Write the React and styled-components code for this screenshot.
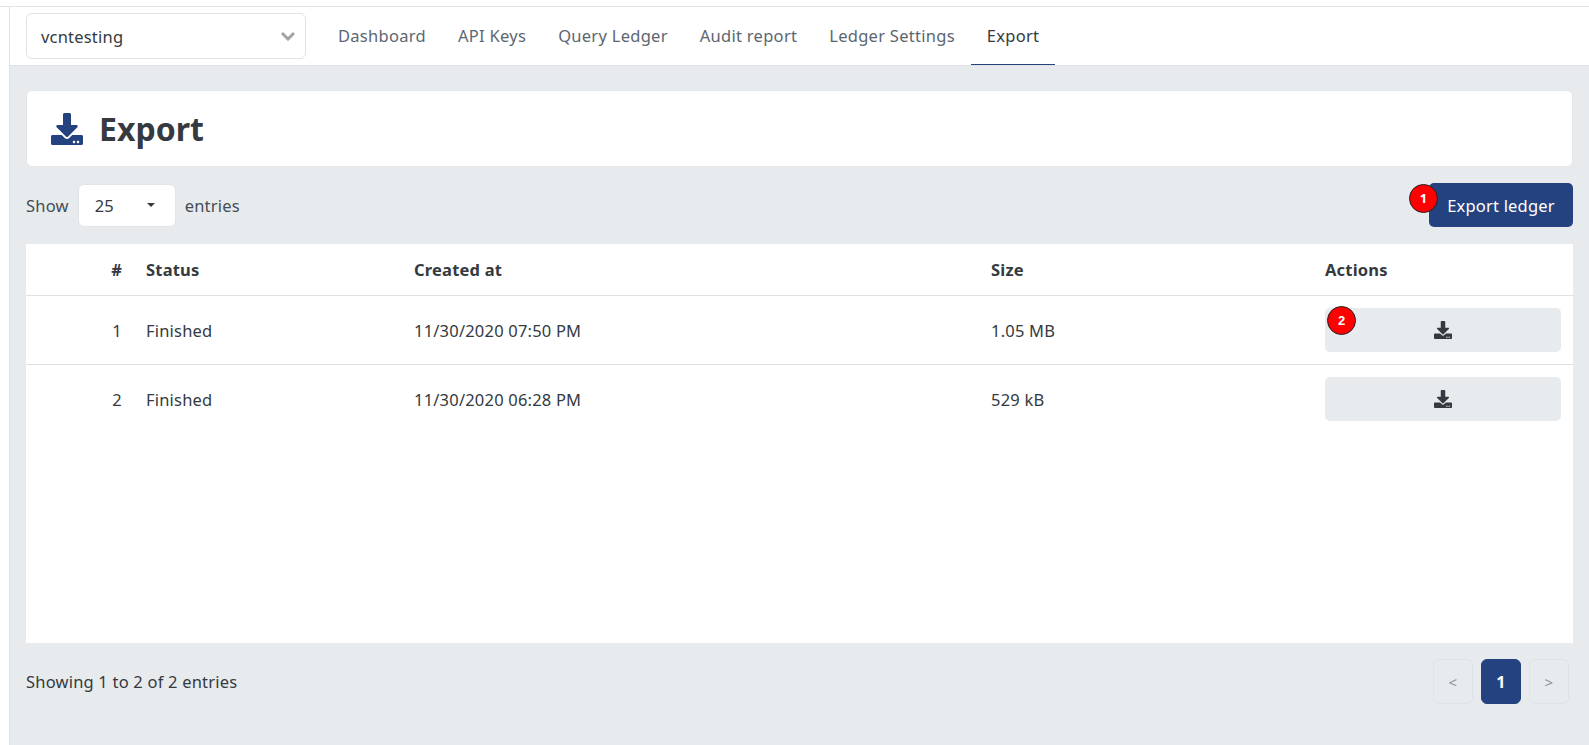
import React from 'react'
import styled, { createGlobalStyle } from 'styled-components'
import { FaDownload } from 'react-icons/fa'

const GlobalStyle = createGlobalStyle`
    html, body {
        margin: 0;
        padding: 0;
        background: #fff;
    }
    body {
        font-family: "Noto Sans", "Open Sans", sans-serif;
        font-size: 16.5px;
        letter-spacing: 0.2px;
        color: #343a40;
        overflow: hidden;
    }
`

const Page = styled.div`
    height: 745px;
    display: flex;
    flex-direction: column;
`
const TopStrip = styled.div`
    height: 6px;
    border-bottom: 1px solid #e1e3ea;
    flex-shrink: 0;
`
const Body = styled.div`
    flex: 1;
    margin-left: 9px;
    border-left: 1px solid #dfe2e6;
    background: #e8ebee;
    display: flex;
    flex-direction: column;
`
const Navbar = styled.div`
    height: 59px;
    box-sizing: border-box;
    background: #fff;
    border-bottom: 1px solid #dee2e6;
    padding-left: 16px;
    display: flex;
`
const LedgerSelect = styled.div`
    width: 280px;
    height: 46px;
    margin-top: 6px;
    box-sizing: border-box;
    border: 1px solid #dee2e6;
    border-radius: 6px;
    padding: 0 9px 0 14px;
    display: flex;
    align-items: center;
    justify-content: space-between;
`
const Tabs = styled.div`
    display: flex;
    margin-left: 16px;
`
const Tab = styled.div`
    padding: 0 16px;
    height: 58px;
    box-sizing: border-box;
    display: flex;
    align-items: center;
    white-space: nowrap;
    letter-spacing: 0.28px;
    color: ${props => props.$active ? '#343a40' : '#5c6670'};
    border-bottom: 1px solid ${props => props.$active ? '#24427f' : 'transparent'};
`
const Content = styled.div`
    padding: 24px 16px 0;
    display: flex;
    flex-direction: column;
`
const TitleCard = styled.div`
    height: 77px;
    background: #fff;
    border-radius: 6px;
    border: 1px solid #e4e7ea;
    box-sizing: border-box;
    padding: 0 24px;
    display: flex;
    align-items: center;
    gap: 16px;
    color: #24427f;
`
const Title = styled.h1`
    margin: 0;
    font-size: 32px;
    font-weight: 700;
    letter-spacing: 0;
    color: #343a40;
`
const Toolbar = styled.div`
    display: flex;
    align-items: center;
    justify-content: space-between;
    margin-top: 16px;
    height: 44px;
`
const EntriesControl = styled.div`
    display: flex;
    align-items: center;
    gap: 9px;
    color: #454d55;
`
const PageSize = styled.div`
    width: 98px;
    height: 43px;
    box-sizing: border-box;
    background: #fff;
    border: 1px solid #e1e4e8;
    border-radius: 6px;
    padding: 0 20px 0 16px;
    display: flex;
    align-items: center;
    justify-content: space-between;
    color: #343a40;
`
const Caret = styled.span`
    width: 0;
    height: 0;
    border-left: 4px solid transparent;
    border-right: 4px solid transparent;
    border-top: 4px solid #343a40;
`
const ExportButton = styled.button`
    position: relative;
    width: 144px;
    height: 44px;
    border: 0;
    border-radius: 5px;
    background: #24427f;
    color: #fff;
    font: inherit;
    letter-spacing: inherit;
    padding: 0;
`
const Marker = styled.span`
    position: absolute;
    left: ${props => props.$left}px;
    top: ${props => props.$top}px;
    width: 29px;
    height: 29px;
    box-sizing: border-box;
    border: 1px solid #222;
    border-radius: 50%;
    background: #ff0000;
    color: #fff;
    font-size: 13px;
    font-weight: 700;
    line-height: 27px;
    text-align: center;
    letter-spacing: 0;
`
const TableCard = styled.div`
    margin-top: 17px;
    height: 399px;
    background: #fff;
`
const Row = styled.div`
    display: grid;
    grid-template-columns: 120px 268px 577px 334px 1fr;
    align-items: center;
    height: ${props => props.$height}px;
    box-sizing: border-box;
    padding-right: 12px;
    padding-bottom: ${props => props.$head ? 1 : 0}px;
    border-bottom: ${props => props.$last ? '0' : '1px solid #dee2e6'};
    font-weight: ${props => props.$head ? 700 : 400};
    color: #343a40;
`
const Index = styled.div`
    text-align: right;
    padding-right: 24px;
`
const ActionButton = styled.button`
    position: relative;
    width: 100%;
    height: 44px;
    border: 0;
    border-radius: 5px;
    background: #e8ebee;
    color: #343a40;
    display: flex;
    align-items: center;
    justify-content: center;
    padding: 0;
`
const Footer = styled.div`
    display: flex;
    align-items: center;
    justify-content: space-between;
    margin-top: 16px;
    height: 45px;
    color: #343a40;
`
const Pagination = styled.div`
    display: flex;
    gap: 8px;
    margin-right: 4px;
`
const PageButton = styled.div`
    width: 40px;
    height: 45px;
    box-sizing: border-box;
    border-radius: 6px;
    display: flex;
    align-items: center;
    justify-content: center;
    font-size: ${props => props.$active ? 16 : 15}px;
    font-weight: ${props => props.$active ? 700 : 400};
    color: ${props => props.$active ? '#fff' : '#8a929a'};
    background: ${props => props.$active ? '#24427f' : 'transparent'};
    border: 1px solid ${props => props.$active ? '#24427f' : '#dfe2e6'};
`

const exportsData = [
    { id: 1, status: 'Finished', created: '11/30/2020 07:50 PM', size: '1.05 MB', marker: true },
    { id: 2, status: 'Finished', created: '11/30/2020 06:28 PM', size: '529 kB' },
]

const tabs = ['Dashboard', 'API Keys', 'Query Ledger', 'Audit report', 'Ledger Settings', 'Export']

const App = () => {
    return (
        <Page>
            <GlobalStyle />
            <TopStrip />
            <Body>
                <Navbar>
                    <LedgerSelect>
                        vcntesting
                        <svg width="16" height="10" viewBox="0 0 16 10">
                            <path d="M2 2l6 6 6-6" fill="none" stroke="#a3a3a3" strokeWidth="3" />
                        </svg>
                    </LedgerSelect>
                    <Tabs>
                        {tabs.map(t => <Tab key={t} $active={t === 'Export'}>{t}</Tab>)}
                    </Tabs>
                </Navbar>
                <Content>
                    <TitleCard>
                        <FaDownload size={32} />
                        <Title>Export</Title>
                    </TitleCard>
                    <Toolbar>
                        <EntriesControl>
                            Show
                            <PageSize>25<Caret /></PageSize>
                            entries
                        </EntriesControl>
                        <ExportButton>
                            <Marker $left={-20} $top={1}>1</Marker>
                            Export ledger
                        </ExportButton>
                    </Toolbar>
                    <TableCard>
                        <Row $head $height={52}>
                            <Index>#</Index>
                            <div>Status</div>
                            <div>Created at</div>
                            <div>Size</div>
                            <div>Actions</div>
                        </Row>
                        {exportsData.map((row, i) => {
                            const last = i === exportsData.length - 1
                            return (
                                <Row key={row.id} $height={last ? 68 : 69} $last={last}>
                                    <Index>{row.id}</Index>
                                    <div>{row.status}</div>
                                    <div>{row.created}</div>
                                    <div>{row.size}</div>
                                    <ActionButton>
                                        {row.marker && <Marker $left={2} $top={-2}>2</Marker>}
                                        <FaDownload size={18} />
                                    </ActionButton>
                                </Row>
                            )
                        })}
                    </TableCard>
                    <Footer>
                        Showing 1 to 2 of 2 entries
                        <Pagination>
                            <PageButton>&lt;</PageButton>
                            <PageButton $active>1</PageButton>
                            <PageButton>&gt;</PageButton>
                        </Pagination>
                    </Footer>
                </Content>
            </Body>
        </Page>
    )
}

export default App
